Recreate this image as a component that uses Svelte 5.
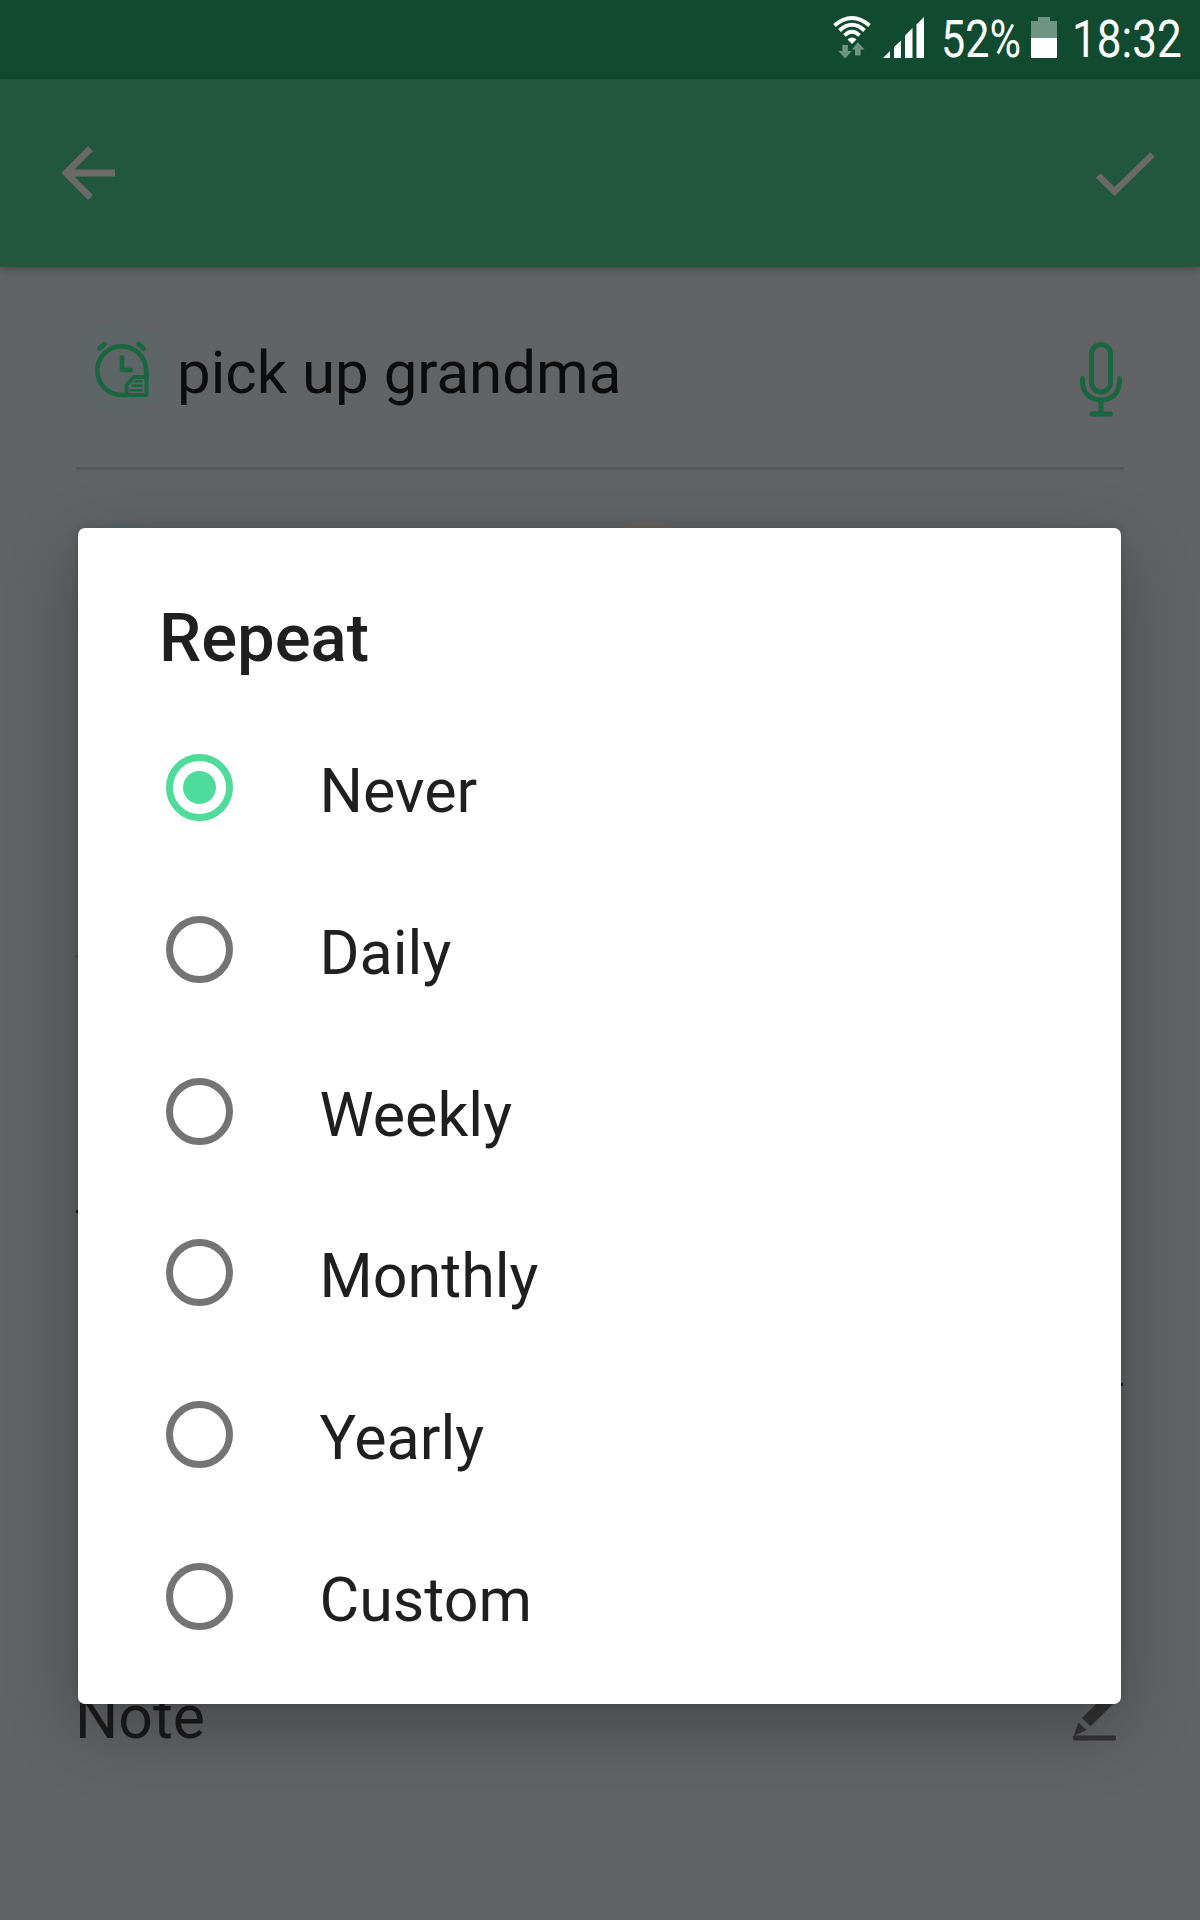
<script lang="ts">
  let selected = $state('Never');

  const options = ['Never', 'Daily', 'Weekly', 'Monthly', 'Yearly', 'Custom'];
</script>

<div class="screen">
  <div class="status-bar">
    <svg class="wifi" width="38" height="46" viewBox="0 0 38 46" fill="none" stroke="#fff" stroke-width="3.800">
      <path d="M1.500 9.500 Q19 -5.500 36.500 9.500" />
      <path d="M6.500 14.500 Q19 3 31.500 14.500" />
      <path d="M11.500 19.500 Q19 12 26.500 19.500" />
      <path d="M14.500 23.500 Q19 19.500 23.500 23.500 L19 28 Z" fill="#fff" stroke="none" />
      <path d="M9.300 29 h5.600 v6 h4 l-6.800 7.500 -6.800 -7.500 h4 Z" fill="#6f9483" stroke="none" />
      <path d="M22 39.500 h5.600 v-6 h4 l-6.800 -7.500 -5.800 7.500 h3 Z" fill="#6f9483" stroke="none" />
    </svg>
    <svg class="signal" width="42" height="42" viewBox="0 0 42 42" fill="#fff">
      <path d="M0 41 L7 34 V41 Z" />
      <path d="M11 30 L18 23.500 V41 H11 Z" />
      <path d="M22 18.500 L29.500 11 V41 H22 Z" />
      <path d="M33.500 7.500 L41 0 V41 H33.500 Z" />
    </svg>
    <span class="percent"><span class="narrow">52%</span></span>
    <svg class="battery" width="26" height="41" viewBox="0 0 26 41">
      <path d="M7 0 H19 V4 H26 V21 H0 V4 H7 Z" fill="#6f9483" />
      <path d="M0 21 H26 V41 H0 Z" fill="#fff" />
    </svg>
    <span class="time"><span class="narrow">18:32</span></span>
  </div>

  <header class="app-bar">
    <button class="icon-button" aria-label="Back">
      <svg width="54" height="54" viewBox="0 0 54 54" fill="none" stroke="#6c6a69" stroke-width="6.800">
        <path d="M28.500 2.500 L4 27 L28.500 51.500 M5 27 H53" />
      </svg>
    </button>
    <button class="icon-button save" aria-label="Save">
      <svg width="60" height="46" viewBox="0 0 60 46" fill="none" stroke="#6c6a69" stroke-width="6.500">
        <path d="M2.200 23.500 L18.500 39.500 L56.500 2.500" />
      </svg>
    </button>
  </header>

  <main class="form">
    <div class="title-row">
      <span class="badge">
        <svg class="clock" width="54" height="57" viewBox="0 0 54 57" fill="none" stroke="#196641" stroke-width="4.600" stroke-linecap="round" stroke-linejoin="round">
          <path d="M31.500 54 H26.700 A24.400 24.400 0 1 1 51.100 29.700 L51.500 36" />
          <path d="M31.500 54 V44 L39 36 H51.500 V54 Z" stroke-width="4" />
          <path d="M27 16.500 V29 H35.500" />
          <path d="M4.500 7.500 L9.500 3 M43.500 3 L48.500 7.500" />
          <path d="M40.500 40.300 H46.500 M37.500 44.800 H46.500 M35.500 49.200 H46.500" stroke-width="2.400" />
        </svg>
      </span>
      <span class="title">pick up grandma</span>
      <svg class="mic" width="42" height="76" viewBox="0 0 42 76" fill="none" stroke="#196641" stroke-width="4.900" stroke-linecap="round">
        <rect x="11.500" y="2.500" width="19" height="47.500" rx="9.500" />
        <path d="M2.500 36.500 V39 C2.500 51 10 58 21 58 C32 58 39.500 51 39.500 39 V36.500" />
        <path d="M21 58 V72 M12 72 H30.500" />
      </svg>
    </div>
    <div class="tags">
      <span class="tag teal"></span>
      <span class="tag amber"></span>
    </div>
    <div class="field date"></div>
    <div class="field time-from"></div>
    <div class="field time-to"></div>
    <div class="note-row">
      <span>Note</span>
      <svg width="46" height="48" viewBox="0 0 46 48" fill="#333334">
        <path d="M10 25 L33 2 L42 10 L18.500 33.500 Z" />
        <path d="M6.500 29.500 L14.500 37 L1.500 43 Z" />
        <rect x="1" y="42.500" width="43" height="5" rx="1.500" />
      </svg>
    </div>
  </main>

  <div class="overlay">
    <div class="dialog" role="dialog" aria-labelledby="dialog-title">
      <h2 id="dialog-title">Repeat</h2>
      <div class="options" role="radiogroup">
        {#each options as option}
          <button
            class="option"
            role="radio"
            aria-checked={selected === option}
            onclick={() => (selected = option)}
          >
            <span class="radio" class:checked={selected === option}></span>
            <span class="label">{option}</span>
          </button>
        {/each}
      </div>
    </div>
  </div>
</div>

<style>
  :global(body) {
    background: #626365;
  }

  .screen {
    position: relative;
    display: flex;
    flex-direction: column;
    width: 1200px;
    height: 1920px;
    overflow: hidden;
    background: #626365;
    font-family: Roboto, 'Liberation Sans', sans-serif;
    font-size: 60px;
  }

  svg {
    display: block;
    flex: none;
  }

  button {
    border: none;
    padding: 0;
    background: none;
    font: inherit;
    color: inherit;
    text-align: left;
  }

  .status-bar {
    display: flex;
    align-items: flex-start;
    justify-content: flex-end;
    box-sizing: border-box;
    height: 79px;
    padding: 16px 16px 0 0;
    background: #104b31;
    color: #fff;
    font-size: 51px;
    line-height: 47px;
  }

  .signal {
    margin: 1px 0 0 12px;
  }

  .percent {
    width: 82px;
    margin-left: 16px;
  }

  .battery {
    margin: 1px 0 0 8px;
  }

  .time {
    width: 112px;
    margin-left: 15px;
  }

  .narrow {
    display: inline-block;
    transform: scaleX(0.865);
    transform-origin: left;
    white-space: nowrap;
  }

  .percent .narrow {
    transform: scaleX(0.845);
  }

  .app-bar {
    display: flex;
    align-items: center;
    justify-content: space-between;
    box-sizing: border-box;
    height: 188px;
    padding: 0 44px 0 62px;
    background: #21573f;
    box-shadow: 0 2px 10px rgba(0, 0, 0, 0.3);
  }

  .save {
    margin-top: 3px;
  }

  .form {
    flex: 1;
    display: flex;
    flex-direction: column;
    padding: 0 76px;
  }

  .title-row {
    display: flex;
    align-items: center;
    box-sizing: border-box;
    height: 203px;
    border-bottom: 3px solid #57585a;
    color: #0c0c0d;
  }

  .badge {
    display: flex;
    align-items: center;
    justify-content: center;
    width: 94px;
    height: 94px;
    margin-top: 4px;
    border-radius: 50%;
    background: #5e6566;
  }

  .clock {
    margin: 1px 2px 0 0;
  }

  .title {
    flex: 1;
    margin: 10px 0 0 7px;
  }

  .mic {
    margin: 25px 2px 0 0;
  }

  .tags {
    display: flex;
    gap: 431px;
    padding-top: 51px;
  }

  .tag {
    width: 94px;
    height: 94px;
    border-radius: 50%;
  }

  .teal {
    background: #596567;
  }

  .amber {
    background: #68645f;
  }

  .field {
    box-sizing: border-box;
    width: 500px;
    border-bottom: 3px solid #191919;
  }

  .date {
    height: 343px;
    border-color: #4c4d4e;
  }

  .time-from {
    height: 255px;
  }

  .time-to {
    align-self: flex-end;
    height: 173px;
    margin-right: 1px;
  }

  .note-row {
    display: flex;
    align-items: flex-start;
    justify-content: space-between;
    margin-top: auto;
    margin-left: -1px;
    padding-right: 6px;
    height: 238px;
    color: #1b1b1c;
    font-size: 60.700px;
    line-height: 71px;
  }

  .note-row svg {
    margin-top: 11px;
  }

  .overlay {
    position: absolute;
    inset: 0;
    display: flex;
    align-items: flex-start;
    justify-content: center;
    padding-top: 528px;
  }

  .dialog {
    box-sizing: border-box;
    width: 1043px;
    height: 1175.500px;
    margin-right: 1px;
    padding-top: 70px;
    border-radius: 7px;
    background: #fff;
    color: #1f1f1f;
    box-shadow: 0 24px 70px rgba(0, 0, 0, 0.28), 0 0 8px rgba(0, 0, 0, 0.12);
  }

  h2 {
    margin: 0 0 30px 81px;
    font-size: 67px;
    font-weight: 500;
    line-height: 80px;
  }

  .options {
    display: flex;
    flex-direction: column;
    margin-top: -1px;
  }

  .option {
    display: flex;
    align-items: center;
    gap: 87px;
    height: 161.700px;
    padding-left: 87.500px;
    line-height: 70px;
  }

  .label {
    margin-top: 7px;
    font-size: 61px;
  }

  .radio {
    display: flex;
    align-items: center;
    justify-content: center;
    box-sizing: border-box;
    width: 67px;
    height: 67px;
    border: 7px solid #747474;
    border-radius: 50%;
  }

  .radio.checked {
    border-color: #4fdb9b;
  }

  .radio.checked::after {
    content: '';
    width: 33px;
    height: 33px;
    border-radius: 50%;
    background: #4fdb9b;
  }
</style>
